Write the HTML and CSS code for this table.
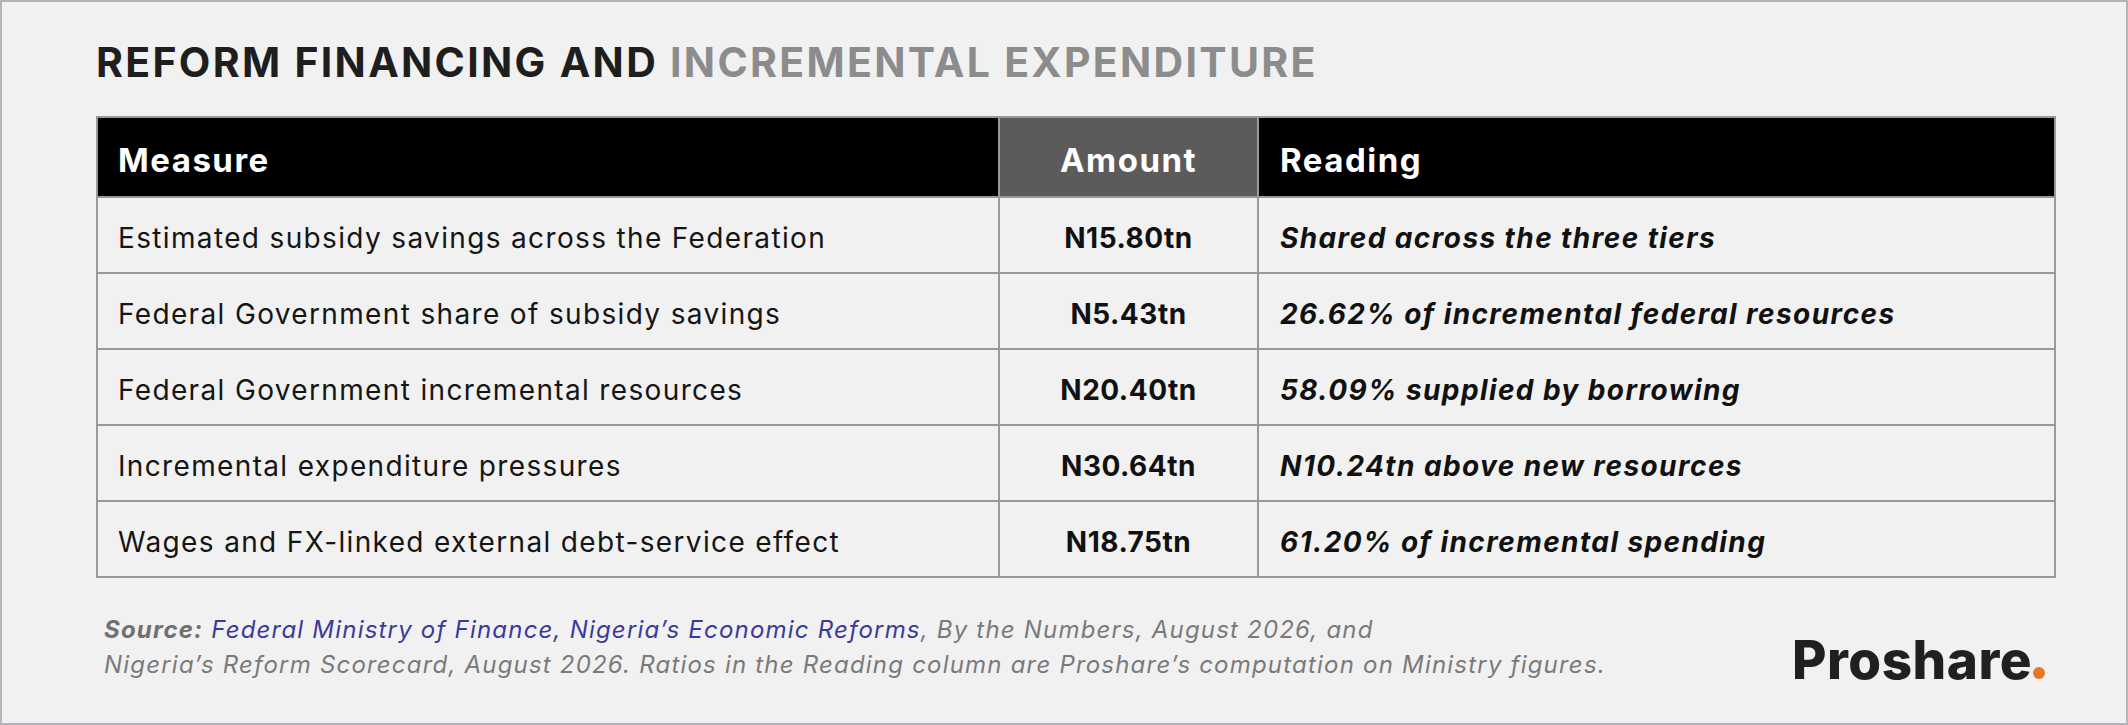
FILE: index.html
```html
<!DOCTYPE html>
<html lang="en">
<head>
<meta charset="utf-8">
<title>Reform Financing and Incremental Expenditure</title>
<link rel="stylesheet" href="styles.css">
</head>
<body>
<div class="card">
  <h1 class="title"><span class="title-dark">REFORM FINANCING AND </span><span class="title-muted">INCREMENTAL EXPENDITURE</span></h1>
  <table class="data">
    <colgroup>
      <col class="col-measure">
      <col class="col-amount">
      <col class="col-reading">
    </colgroup>
    <thead>
      <tr>
        <th class="th-measure">Measure</th>
        <th class="th-amount">Amount</th>
        <th class="th-reading">Reading</th>
      </tr>
    </thead>
    <tbody>
      <tr>
        <td class="measure">Estimated subsidy savings across the Federation</td>
        <td class="amount">N15.80tn</td>
        <td class="reading">Shared across the three tiers</td>
      </tr>
      <tr>
        <td class="measure">Federal Government share of subsidy savings</td>
        <td class="amount">N5.43tn</td>
        <td class="reading">26.62% of incremental federal resources</td>
      </tr>
      <tr>
        <td class="measure">Federal Government incremental resources</td>
        <td class="amount">N20.40tn</td>
        <td class="reading">58.09% supplied by borrowing</td>
      </tr>
      <tr>
        <td class="measure">Incremental expenditure pressures</td>
        <td class="amount">N30.64tn</td>
        <td class="reading">N10.24tn above new resources</td>
      </tr>
      <tr>
        <td class="measure">Wages and FX-linked external debt-service effect</td>
        <td class="amount">N18.75tn</td>
        <td class="reading">61.20% of incremental spending</td>
      </tr>
    </tbody>
  </table>
  <div class="footer">
    <p class="source"><span class="source-label">Source:</span> <span class="source-link">Federal Ministry of Finance, Nigeria’s Economic Reforms</span>, By the Numbers, August 2026, and<br>Nigeria’s Reform Scorecard, August 2026. Ratios in the Reading column are Proshare’s computation on Ministry figures.</p>
    <div class="logo">Proshare<span class="logo-dot"></span></div>
  </div>
</div>
</body>
</html>
```

FILE: styles.css
```css
html, body {
  margin: 0;
  padding: 0;
  background: #f1f1f1;
}

.card {
  box-sizing: border-box;
  width: 2128px;
  height: 725px;
  border: 2px solid #b4b4b8;
  background: #f1f1f1;
  padding: 35px 70px 0 94px;
  font-family: "Inter", "Open Sans", sans-serif;
  color: #111111;
}

.title {
  margin: 0 0 29px 0;
  font-size: 41px;
  line-height: 50px;
  font-weight: 700;
  letter-spacing: 2.3px;
  white-space: nowrap;
}

.title-dark {
  color: #1e1e1e;
}

.title-muted {
  color: #8c8c8c;
}

.data {
  width: 1960px;
  table-layout: fixed;
  border-spacing: 0;
  border-top: 2px solid #999999;
  border-left: 2px solid #999999;
}

.col-measure { width: 902px; }
.col-amount { width: 259px; }
.col-reading { width: 797px; }

.data th,
.data td {
  box-sizing: border-box;
  border-right: 2px solid #999999;
  border-bottom: 2px solid #999999;
  vertical-align: middle;
  white-space: nowrap;
}

.data th {
  height: 80px;
  padding: 5px 0 0 20px;
  background: #000000;
  color: #ffffff;
  font-size: 33px;
  font-weight: 700;
  text-align: left;
  letter-spacing: 1.5px;
}

.data th.th-amount {
  background: #5b5b5b;
  text-align: center;
  padding-left: 0;
}

.data th.th-reading {
  padding-left: 21px;
}

.data td {
  height: 76px;
  padding: 6px 0 0 20px;
  font-size: 28px;
  line-height: 34px;
}

.data td.measure {
  font-weight: 400;
  letter-spacing: 1.35px;
  color: #151515;
}

.data td.amount {
  padding-left: 0;
  text-align: center;
  font-weight: 700;
  letter-spacing: 0.5px;
}

.data td.reading {
  padding-left: 21px;
  font-weight: 700;
  font-style: italic;
  letter-spacing: 1.4px;
}

.footer {
  display: flex;
  justify-content: space-between;
  align-items: flex-start;
}

.source {
  margin: 34px 0 0 8px;
  font-size: 24px;
  line-height: 35px;
  font-style: italic;
  font-weight: 400;
  color: #7a7a7a;
  letter-spacing: 1.2px;
}

.source-label {
  font-weight: 700;
  color: #707070;
}

.source-link {
  color: #3a3a9c;
}

.logo {
  margin: 56px 11px 0 0;
  font-size: 53px;
  line-height: 52px;
  font-weight: 800;
  color: #221f20;
  letter-spacing: 0.5px;
  white-space: nowrap;
}

.logo-dot {
  display: inline-block;
  width: 12px;
  height: 12px;
  margin-left: 1px;
  border-radius: 50%;
  background: #e87722;
}
```
